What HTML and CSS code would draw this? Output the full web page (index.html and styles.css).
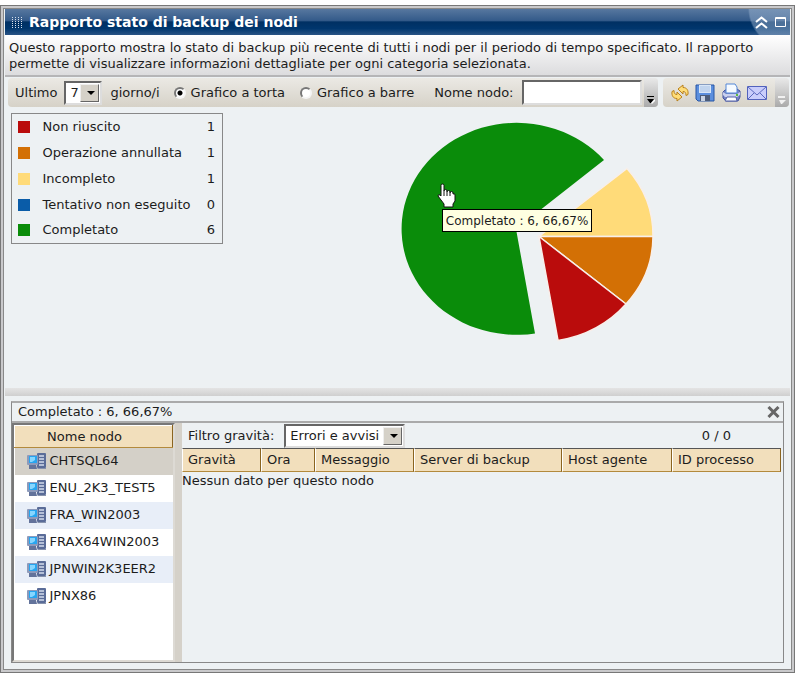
FILE: index.html
```html
<!DOCTYPE html>
<html lang="it">
<head>
    <meta charset="utf-8">
    <title>Rapporto stato di backup dei nodi</title>
    <meta name="viewport" content="width=device-width, initial-scale=1.0">
    <link rel="stylesheet" href="styles.css">
</head>
<body>
    <!-- shared node icon -->
    <svg class="symbols" width="0" height="0">
        <symbol id="node" viewBox="0 0 19 17">
            <rect x="10" y="0" width="9" height="15" rx="1" fill="#5a6c98"/>
            <path d="M12 3h5M12 6h5M12 9h5M12 12h5" stroke="#d3dbec" stroke-width="1.5"/>
            <rect x="0" y="2" width="11" height="10" rx="1" fill="#8d9abb"/>
            <rect x="2" y="3" width="8" height="7" fill="#27a5ef"/>
            <path d="M3 4h5v3L5 9H3z" fill="#86d6ff"/>
            <path d="M2 12h7l1 4H2z" fill="#63739b"/>
            <path d="M10 15h9v1h-8z" fill="#8793ad"/>
        </symbol>
    </svg>

    <div class="window">
        <div class="inner">
            <div class="titlebar">
                <svg class="dots" width="10" height="11" viewBox="0 0 10 11">
                    <path d="M.5 0v11M3.500 0v11M6.500 0v11M9.500 0v11" stroke="#d5deea" stroke-width="1" stroke-dasharray="1 1"/>
                </svg>
                <h1>Rapporto stato di backup dei nodi</h1>
                <button class="icon-btn" aria-label="Riduci">
                    <svg width="13" height="13" viewBox="0 0 13 13" fill="none" stroke="#fff" stroke-width="2">
                        <path d="M1 6l5.500-4.500L12 6M1 12l5.500-4.500L12 12"/>
                    </svg>
                </button>
                <button class="icon-btn" aria-label="Ingrandisci">
                    <svg width="11" height="10" viewBox="0 0 11 10" fill="none" stroke="#fff">
                        <path d="M.5 .5h10v9H.5zM0 1.500h11"/>
                    </svg>
                </button>
            </div>

            <p class="description">Questo rapporto mostra lo stato di backup più recente di tutti i nodi per il periodo di tempo specificato. Il rapporto permette di visualizzare informazioni dettagliate per ogni categoria selezionata.</p>

            <div class="toolbars">
                <form class="toolbar filters">
                    <label for="days">Ultimo</label>
                    <span class="select days"><select id="days"><option>7</option></select></span>
                    <span class="unit">giorno/i</span>
                    <input type="radio" name="chart" id="pie" checked>
                    <label for="pie">Grafico a torta</label>
                    <input type="radio" name="chart" id="bar">
                    <label for="bar">Grafico a barre</label>
                    <label for="nodeName" class="name-label">Nome nodo:</label>
                    <input type="text" id="nodeName">
                    <span class="grip">
                        <svg width="8" height="8" viewBox="0 0 8 8"><path d="M0 0h7v1H0zM0 3h7L4 7H3z" fill="#000"/><path d="M4 7l4-4v2L5 8z" fill="#fff"/></svg>
                    </span>
                </form>
                <div class="toolbar actions">
                    <button class="icon-btn" aria-label="Aggiorna">
                        <svg width="18" height="18" viewBox="0 0 18 18" fill="#ffdd78" stroke="#b9801d" stroke-width="1">
                            <path d="M7 5l5-4v2.500c4 0 5.500 3 5 7l-2 1c0-3-1-4-3-4V10z"/>
                            <path d="M11 13l-5 4v-2.500c-4 0-5.500-3-5-7l2-1c0 3 1 4 3 4V8z"/>
                        </svg>
                    </button>
                    <button class="icon-btn" aria-label="Salva">
                        <svg width="20" height="18" viewBox="0 0 20 18">
                            <path d="M1 1h18v16H3l-2-2z" fill="#5c8fde" stroke="#2956a5"/>
                            <path d="M4 1h12v8H4z" fill="#d8e6f7"/>
                            <path d="M5 3h10M5 5h10M5 7h10" stroke="#a9c2e5"/>
                            <path d="M5 11h10v6H5z" fill="#4c5d7a"/>
                            <path d="M6 12h4v5H6z" fill="#c9d3e3"/>
                        </svg>
                    </button>
                    <button class="icon-btn" aria-label="Stampa">
                        <svg width="20" height="20" viewBox="0 0 20 20">
                            <path d="M4 7L2 9v6l3 3h12l2-4V8l-3-2z" fill="#7785c4" stroke="#4353a0"/>
                            <path d="M5 1h9l2 3v6H5z" fill="#f5faff" stroke="#5487d6"/>
                            <path d="M2 9l3 2h11l3-2v3l-3 2H4l-2-2z" fill="#c9d0ef"/>
                            <path d="M6 14h9l1 4H4z" fill="#fff" stroke="#5261a8"/>
                            <path d="M15 12h2" stroke="#5ebd3c" stroke-width="2"/>
                        </svg>
                    </button>
                    <button class="icon-btn" aria-label="Invia e-mail">
                        <svg width="20" height="14" viewBox="0 0 20 14">
                            <path d="M.5 .5h19v13H.5z" fill="#c9cdfb" stroke="#5262bd"/>
                            <path d="M1 1l9 8 9-8M1 13l6-6M19 13l-6-6" fill="none" stroke="#5b69be"/>
                        </svg>
                    </button>
                    <span class="grip">
                        <svg width="8" height="8" viewBox="0 0 8 8"><path d="M0 0h7v2H0zM1 4h7L4 8H3z" fill="#f1f1f1"/></svg>
                    </span>
                </div>
            </div>

            <div class="chart-area">
                <table class="legend">
                    <tr><td><i class="swatch failed"></i></td><td>Non riuscito</td><td>1</td></tr>
                    <tr><td><i class="swatch canceled"></i></td><td>Operazione annullata</td><td>1</td></tr>
                    <tr><td><i class="swatch incomplete"></i></td><td>Incompleto</td><td>1</td></tr>
                    <tr><td><i class="swatch missed"></i></td><td>Tentativo non eseguito</td><td>0</td></tr>
                    <tr><td><i class="swatch done"></i></td><td>Completato</td><td>6</td></tr>
                </table>
                <div class="chart">
                    <svg class="pie" width="254" height="220" viewBox="400 122 254 220">
                        <path d="M515 229L603 160A115 106 0 1 0 534 333.500Z" fill="#0a8c0a"/>
                        <g stroke="#f8efea" stroke-width="1.500">
                            <path d="M538 236.500L626 168.500A114 105 0 0 1 652 236.500Z" fill="#ffdb79"/>
                            <path d="M538 236.500H652A114 105 0 0 1 625 304Z" fill="#d37005"/>
                            <path d="M538 236.500L625 304A114 105 0 0 1 557 340.500Z" fill="#ba0c0c"/>
                        </g>
                    </svg>
                    <div class="tooltip">Completato : 6, 66,67%</div>
                    <svg class="cursor" width="21" height="25" viewBox="0 0 21 25">
                        <path d="M5 13V2.500Q5 1 6.500 1T8 2.500V8q0-1.500 1.500-1.500T11 8v1q0-1.500 1.500-1.500T14 9v1q0-1.500 1.500-1.500T17 10v1q2-1 2 1v6l-2 3v3H8v-3l-6-8q0-2 2-1z" fill="#fff" stroke="#111"/>
                        <path d="M8 8v5M11 9v4M14 10v3" stroke="#111" fill="none"/>
                    </svg>
                </div>
            </div>

            <div class="splitter"></div>

            <div class="details">
                <div class="details-head">
                    <span>Completato : 6, 66,67%</span>
                    <button class="icon-btn" aria-label="Chiudi">
                        <svg width="13" height="12" viewBox="0 0 13 12"><path d="M1.500 1l10 10M11.500 1l-10 10" stroke="#666" stroke-width="3"/></svg>
                    </button>
                </div>
                <div class="details-body">
                    <div class="nodes">
                        <table>
                            <thead><tr><th>Nome nodo</th></tr></thead>
                            <tbody>
                                <tr class="selected"><td><svg width="19" height="17"><use href="#node"/></svg>CHTSQL64</td></tr>
                                <tr><td><svg width="19" height="17"><use href="#node"/></svg>ENU_2K3_TEST5</td></tr>
                                <tr><td><svg width="19" height="17"><use href="#node"/></svg>FRA_WIN2003</td></tr>
                                <tr><td><svg width="19" height="17"><use href="#node"/></svg>FRAX64WIN2003</td></tr>
                                <tr><td><svg width="19" height="17"><use href="#node"/></svg>JPNWIN2K3EER2</td></tr>
                                <tr><td><svg width="19" height="17"><use href="#node"/></svg>JPNX86</td></tr>
                            </tbody>
                        </table>
                    </div>
                    <div class="resizer"></div>
                    <div class="messages">
                        <div class="message-filter">
                            <label for="severity">Filtro gravità:</label>
                            <span class="select severity"><select id="severity"><option>Errori e avvisi</option></select></span>
                            <span class="pages">0 / 0</span>
                        </div>
                        <table>
                            <colgroup>
                                <col class="c-severity"><col class="c-time"><col class="c-message"><col class="c-server"><col class="c-host"><col>
                            </colgroup>
                            <thead>
                                <tr><th>Gravità</th><th>Ora</th><th>Messaggio</th><th>Server di backup</th><th>Host agente</th><th>ID processo</th></tr>
                            </thead>
                            <tbody>
                                <tr><td colspan="6">Nessun dato per questo nodo</td></tr>
                            </tbody>
                        </table>
                    </div>
                </div>
            </div>
        </div>
    </div>
</body>
</html>
```
FILE: styles.css
```css
* {
    box-sizing: border-box;
}

body {
    margin: 0;
    padding-top: 5px;
    background-color: #fff;
    font-family: Verdana, 'DejaVu Sans', sans-serif;
    font-size: 13px;
    line-height: 16px;
    color: #1c1c1c;
}

table {
    border-collapse: collapse;
}

.symbols {
    position: absolute;
}

.window {
    border: 1px solid #777;
    padding: 2px;
    background-color: #c9c9cb;
}

.inner {
    border: 1px solid #888;
    padding: 0 1px 1px;
    background-color: #edf1f3;
}

.icon-btn {
    display: flex;
    padding: 0;
    border: none;
    background: none;
    cursor: pointer;
}

/* Title bar */
.titlebar {
    display: flex;
    align-items: center;
    gap: 7px;
    height: 26px;
    padding: 0 4px 0 7px;
    background: radial-gradient(ellipse 42px 40px at 100% 0, rgba(150, 175, 205, 0.5) 96%, transparent), linear-gradient(#57779f, #345b8a 44%, #003063 50%, #00366d 75%, #2a5485);
    color: #fff;
}

.titlebar h1 {
    flex: 1;
    margin: 0;
    font-size: 14px;
    line-height: 16px;
}

.description {
    margin: 0;
    padding: 5px 4px 3px;
    border-bottom: 2px solid #b5b5b7;
    background: linear-gradient(#fff, #dcdcde);
}

/* Toolbars */
.toolbars {
    display: flex;
    gap: 5px;
    padding: 1px 1px 0 3px;
}

.toolbar {
    display: flex;
    align-items: center;
    height: 29px;
    border-radius: 4px;
    background: linear-gradient(#ebe9e4, #d6d2c8);
    overflow: hidden;
}

.filters {
    flex: 1;
    padding-left: 7px;
    white-space: nowrap;
}

.actions {
    gap: 6px;
    padding-left: 8px;
}

.grip {
    display: flex;
    align-self: stretch;
    align-items: flex-end;
    justify-content: center;
    width: 14px;
    margin-left: 2px;
    padding-bottom: 3px;
    background: linear-gradient(#e9e9e9, #aaa);
}

.select {
    position: relative;
    display: inline-flex;
    height: 24px;
    border: 2px solid;
    border-color: #666 #ddd #ddd #666;
    background-color: #fff;
}

.select select {
    appearance: none;
    width: 100%;
    padding: 0 18px 0 4px;
    border: none;
    background: none;
    color: inherit;
    font: inherit;
}

.select::before {
    content: '';
    position: absolute;
    top: 1px;
    right: 1px;
    bottom: 1px;
    width: 17px;
    border: 1px solid;
    border-color: #eee #666 #666 #eee;
    background-color: #d5d1c8;
    pointer-events: none;
}

.select::after {
    content: '';
    position: absolute;
    top: 8px;
    right: 5px;
    border: 4px solid transparent;
    border-top-color: #000;
    border-bottom: none;
    pointer-events: none;
}

.days {
    width: 38px;
    margin: 0 8px 0 7px;
}

.unit {
    margin-right: 14px;
}

input[type=radio] {
    appearance: none;
    width: 12px;
    height: 12px;
    margin: 0 5px 0 0;
    border: 2px solid;
    border-color: #777 #f5f5f5 #f5f5f5 #777;
    border-radius: 50%;
    background-color: #fff;
}

input[type=radio]:checked {
    background-image: radial-gradient(#000 2px, transparent 3px);
}

#pie + label {
    margin-right: 15px;
}

.name-label {
    margin: 0 8px 0 20px;
}

input[type=text] {
    flex: 1;
    min-width: 0;
    height: 25px;
    border: 2px solid;
    border-color: #666 #ddd #ddd #666;
    background-color: #fff;
    font: inherit;
}

/* Chart */
.chart-area {
    display: flex;
    align-items: flex-start;
    min-height: 281px;
    padding: 6px 6px 0;
}

.legend {
    flex: none;
    width: 212px;
    border: 1px solid #888;
}

.legend td {
    height: 26px;
    padding: 0;
    white-space: nowrap;
}

.legend td:first-child {
    width: 31px;
    padding-left: 6px;
}

.legend td:last-child {
    padding-right: 7px;
    text-align: right;
}

.swatch {
    display: block;
    width: 12px;
    height: 12px;
}

.failed { background-color: #ba0c0c; }
.canceled { background-color: #d37005; }
.incomplete { background-color: #ffdb79; }
.missed { background-color: #0a5ca8; }
.done { background-color: #0a8c0a; }

.chart {
    position: relative;
    flex: none;
    margin: 9px 0 0 23%;
    width: 254px;
}

.pie {
    display: block;
}

.tooltip {
    position: absolute;
    top: 87px;
    left: 41px;
    padding: 3px 3px 2px;
    border: 1px solid #000;
    background-color: #ffffe1;
    font-size: 12px;
    white-space: nowrap;
}

.cursor {
    position: absolute;
    top: 61px;
    left: 35px;
}

.splitter {
    height: 8px;
    background: linear-gradient(#e4e4e4, #cfcfcf);
}

/* Details */
.details {
    margin: 5px 6px;
    border: 1px solid #888;
    border-top: 2px solid #aaa;
}

.details-head {
    display: flex;
    align-items: center;
    justify-content: space-between;
    height: 20px;
    padding: 0 3px 0 6px;
    border-bottom: 2px solid #aaa;
}

.details-body {
    display: flex;
    min-height: 239px;
}

.nodes {
    flex: none;
    width: 163px;
    border: 2px solid;
    border-color: #777 #dddad4 #dddad4 #777;
    background-color: #fff;
}

.nodes table {
    width: 100%;
}

.nodes th {
    padding: 0 18px 0 0;
}

.nodes td {
    height: 27px;
    padding: 0 0 0 12px;
    white-space: nowrap;
}

.nodes td svg {
    margin-right: 4px;
    vertical-align: middle;
}

.nodes tbody tr:nth-child(odd) {
    background-color: #e8eef8;
}

.nodes tbody tr.selected {
    background-color: #d4d0c8;
}

.resizer {
    width: 7px;
    background-color: #d5d1c9;
}

.messages {
    flex: 1;
    min-width: 0;
    padding-right: 2px;
}

.message-filter {
    display: flex;
    align-items: center;
    height: 25px;
    padding-left: 6px;
}

.severity {
    width: 121px;
    margin-left: 10px;
}

.pages {
    margin: 0 50px 0 auto;
}

.messages table {
    width: 100%;
    table-layout: fixed;
    border-collapse: separate;
    border-spacing: 0;
}

.c-severity { width: 79px; }
.c-time { width: 54px; }
.c-message { width: 99px; }
.c-server { width: 148px; }
.c-host { width: 110px; }

th {
    height: 22px;
    border: 1px solid;
    border-color: #fff #8a6420 #b38a3c #fff;
    background-color: #f2dfbc;
    font-weight: normal;
    text-align: center;
}

.messages th {
    height: 24px;
    padding: 0 0 0 5px;
    border-top-color: #555;
    text-align: left;
    white-space: nowrap;
}

.messages td {
    padding: 1px 0;
}
```
